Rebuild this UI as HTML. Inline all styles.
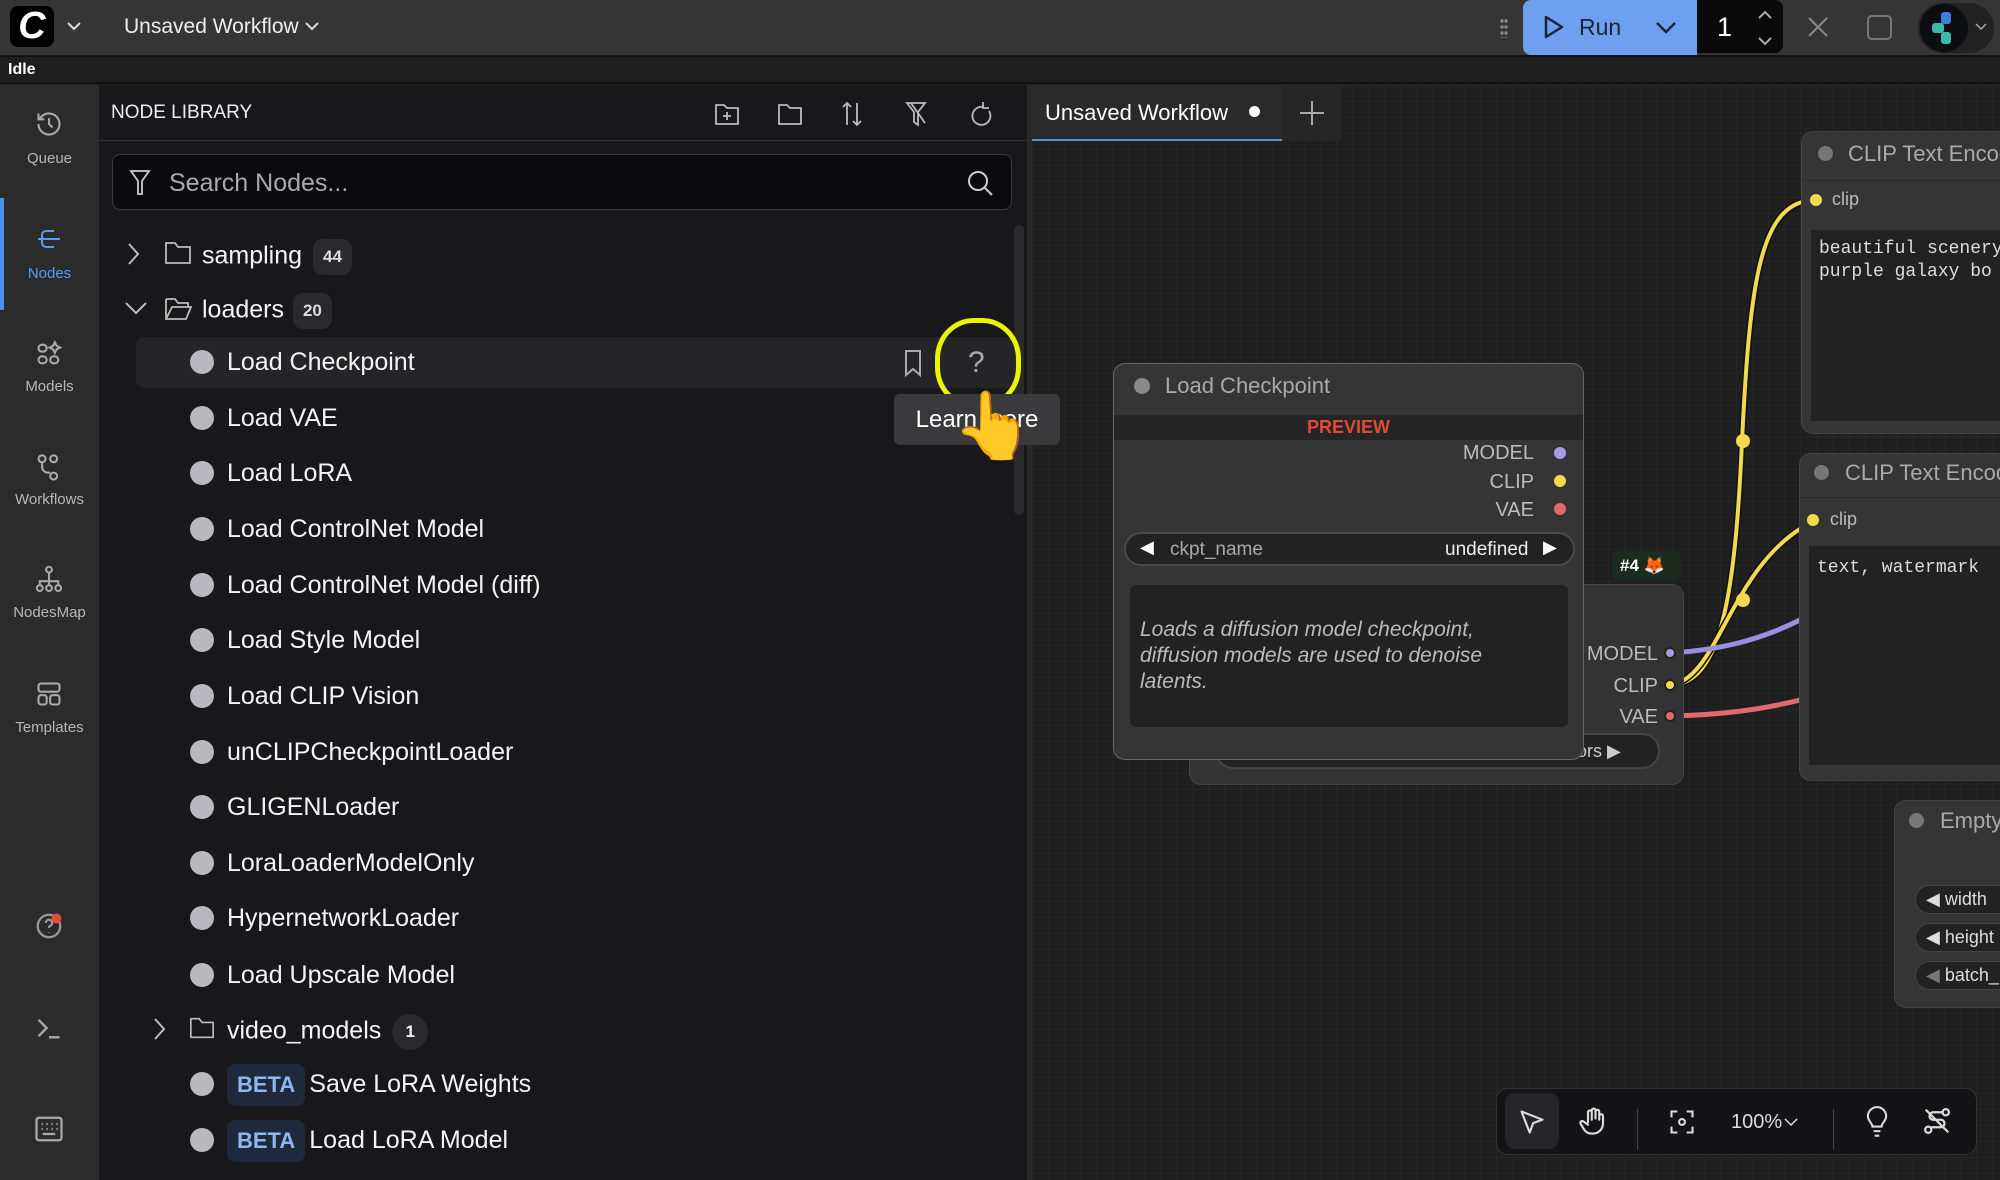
<!DOCTYPE html>
<html><head><meta charset="utf-8"><style>
*{box-sizing:border-box;margin:0;padding:0}
body{width:2000px;height:1180px;overflow:hidden;background:#202020;font-family:"Liberation Sans",sans-serif;color:#e0e0e0;position:relative}
.abs{position:absolute}
#top{left:0;top:0;width:2000px;height:57px;background:#353535;border-bottom:2px solid #111}
#idle{left:0;top:58px;width:2000px;height:26px;background:#1e1e1e;border-bottom:2px solid #111}
#side{left:0;top:85px;width:99px;height:1095px;background:#2b2b2b}
#panel{left:99px;top:85px;width:928px;height:1095px;background:#18181b}
#divider{left:1027px;top:85px;width:5px;height:1095px;background:#2a2a2a}
#canvas{left:1032px;top:85px;width:968px;height:1095px;background-color:#1f1f1f;
background-image:linear-gradient(#262626 1px,transparent 1px),linear-gradient(90deg,#262626 1px,transparent 1px);background-size:16px 16px}
.si{position:absolute;left:0;width:99px;text-align:center;font-size:15px;color:#b8b8b8}
.dot{position:absolute;left:190px;width:24px;height:24px;border-radius:50%;background:#b8b8be}
.lbl{position:absolute;left:227px;font-size:25px;color:#f4f4f4;white-space:nowrap}
.badge{display:inline-block;background:#2a2a2e;border-radius:10px;font-size:17px;font-weight:bold;padding:8px 10px;color:#ddd;vertical-align:middle}
.beta{display:inline-block;background:#1e2a3c;color:#8fb6f0;font-weight:bold;font-size:22px;padding:8px 10px;border-radius:8px;margin-right:4px}
.node{position:absolute;background:#353535;border-radius:12px;border:1px solid #444}
.sock{position:absolute;width:12px;height:12px;border-radius:50%}
.nt{position:absolute;font-size:20px;color:#bbb;text-align:right;width:120px}
</style></head><body>

<div id="top" class="abs">
  <div class="abs" style="left:10px;top:6px;width:44px;height:41px;background:#000;border-radius:8px;color:#fff;font-weight:bold;font-style:italic;font-size:38px;text-align:center;line-height:41px">C</div>
  <svg class="abs" style="left:66px;top:18px" width="16" height="16" viewBox="0 0 16 16"><path d="M2 5l6 6 6-6" stroke="#ddd" stroke-width="2" fill="none"/></svg>
  <div class="abs" style="left:124px;top:15px;font-size:21px;color:#eee">Unsaved Workflow</div>
  <svg class="abs" style="left:304px;top:18px" width="16" height="16" viewBox="0 0 16 16"><path d="M2 5l6 6 6-6" stroke="#ddd" stroke-width="2" fill="none"/></svg>
  <div class="abs" style="left:1500px;top:18px;width:8px;height:20px;background:radial-gradient(circle,#888 1.5px,transparent 2px) 0 0/4px 6px"></div>
  <div class="abs" style="left:1523px;top:0;width:174px;height:55px;background:#6fa0f0;border-radius:8px 0 0 8px"></div>
  <svg class="abs" style="left:1543px;top:14px" width="22" height="26" viewBox="0 0 22 26"><path d="M3 3l16 10-16 10z" stroke="#18243a" stroke-width="2.5" fill="none" stroke-linejoin="round"/></svg>
  <div class="abs" style="left:1579px;top:14px;font-size:23px;color:#18243a">Run</div>
  <svg class="abs" style="left:1654px;top:18px" width="24" height="20" viewBox="0 0 24 20"><path d="M3 5l9 9 9-9" stroke="#18243a" stroke-width="2.5" fill="none"/></svg>
  <div class="abs" style="left:1697px;top:0;width:86px;height:53px;background:#0a0a0a;border-radius:0 8px 8px 0"></div>
  <div class="abs" style="left:1717px;top:12px;font-size:27px;color:#fff">1</div>
  <svg class="abs" style="left:1756px;top:8px" width="18" height="40" viewBox="0 0 18 40"><path d="M3 10l6-6 6 6M3 30l6 6 6-6" stroke="#aaa" stroke-width="2" fill="none"/></svg>
  <svg class="abs" style="left:1806px;top:15px" width="24" height="24"><path d="M3 3l18 18M21 3L3 21" stroke="#888" stroke-width="2"/></svg>
  <div class="abs" style="left:1867px;top:15px;width:25px;height:25px;border:2.5px solid #777;border-radius:5px"></div>
  <div class="abs" style="left:1918px;top:3px;width:76px;height:50px;background:#222;border-radius:25px"></div>
  <div class="abs" style="left:1920px;top:4px;width:48px;height:48px;background:#0b0d10;border-radius:50%"></div>
  <svg class="abs" style="left:1928px;top:10px" width="32" height="36" viewBox="0 0 32 36"><rect x="13" y="2" width="10" height="12" rx="3" fill="#3d7fe0"/><rect x="4" y="13" width="12" height="10" rx="3" fill="#3ab8a8"/><rect x="13" y="22" width="10" height="12" rx="3" fill="#3ab8a8"/></svg>
  <svg class="abs" style="left:1975px;top:22px" width="12" height="10"><path d="M1 2l5 5 5-5" stroke="#aaa" stroke-width="1.5" fill="none"/></svg>
</div>
<div id="idle" class="abs"><div class="abs" style="left:8px;top:3px;font-size:16px;font-weight:bold;color:#fff">Idle</div></div>

<div id="side" class="abs">
  <div class="abs" style="left:0;top:113px;width:4px;height:112px;background:#4a8fe8"></div>
  <svg class="abs" style="left:35px;top:25px" width="28" height="28" viewBox="0 0 24 24" fill="none" stroke="#aaa" stroke-width="1.8"><path d="M3 12a9 9 0 1 0 3-6.7L3 8M3 3v5h5M12 7v5l3 3"/></svg>
  <div class="si" style="top:65px">Queue</div>
  <svg class="abs" style="left:36px;top:142px" width="28" height="24" viewBox="0 0 28 24" fill="none" stroke="#5a9af0" stroke-width="2"><path d="M18 4h-8a4 4 0 0 0-4 4v8a4 4 0 0 0 4 4h8M2 12h22"/></svg>
  <div class="si" style="top:180px;color:#5a9af0">Nodes</div>
  <svg class="abs" style="left:35px;top:255px" width="28" height="28" viewBox="0 0 24 24" fill="none" stroke="#aaa" stroke-width="1.8"><rect x="3" y="4" width="7" height="6" rx="3"/><rect x="3" y="14" width="7" height="6" rx="3"/><rect x="13" y="14" width="7" height="6" rx="3"/><path d="M17 2l1.5 3 3 1.5-3 1.5-1.5 3-1.5-3-3-1.5 3-1.5z"/></svg>
  <div class="si" style="top:293px">Models</div>
  <svg class="abs" style="left:35px;top:368px" width="28" height="30" viewBox="0 0 24 26" fill="none" stroke="#aaa" stroke-width="1.8"><circle cx="6" cy="5" r="3"/><circle cx="16" cy="5" r="3"/><circle cx="16" cy="20" r="3"/><path d="M6 8v4a5 5 0 0 0 5 5h2"/></svg>
  <div class="si" style="top:406px">Workflows</div>
  <svg class="abs" style="left:35px;top:480px" width="28" height="30" viewBox="0 0 24 26" fill="none" stroke="#aaa" stroke-width="1.8"><circle cx="12" cy="4" r="2.5"/><path d="M12 7v5M4 17v-3h16v3M12 12v5"/><circle cx="4" cy="20" r="2.5"/><circle cx="12" cy="20" r="2.5"/><circle cx="20" cy="20" r="2.5"/></svg>
  <div class="si" style="top:519px">NodesMap</div>
  <svg class="abs" style="left:35px;top:595px" width="28" height="28" viewBox="0 0 24 24" fill="none" stroke="#aaa" stroke-width="1.8"><rect x="3" y="3" width="18" height="7" rx="2"/><rect x="3" y="13" width="7" height="8" rx="2"/><rect x="13" y="13" width="8" height="8" rx="2"/></svg>
  <div class="si" style="top:634px">Templates</div>
  <svg class="abs" style="left:34px;top:826px" width="30" height="30" viewBox="0 0 24 24" fill="none" stroke="#999" stroke-width="1.8"><circle cx="12" cy="12" r="9"/><path d="M9.5 9.5a2.5 2.5 0 1 1 3.5 2.3c-.7.3-1 .9-1 1.7M12 17v.5"/><circle cx="18" cy="6" r="4" fill="#e84a3a" stroke="none"/></svg>
  <svg class="abs" style="left:35px;top:930px" width="28" height="26" viewBox="0 0 24 22" fill="none" stroke="#aaa" stroke-width="2"><path d="M3 4l7 7-7 7M12 19h9"/></svg>
  <svg class="abs" style="left:34px;top:1030px" width="30" height="28" viewBox="0 0 24 22" fill="none" stroke="#aaa" stroke-width="1.8"><rect x="2" y="2" width="20" height="18" rx="2"/><path d="M6 7h1M10 7h1M14 7h1M18 7h1M6 11h1M10 11h1M14 11h1M18 11h1M7 15h10"/></svg>
</div>

<div id="panel" class="abs">
  <div class="abs" style="left:12px;top:17px;font-size:19px;color:#eee">NODE LIBRARY</div>
  <svg class="abs" style="left:614px;top:14px;" width="300" height="30" viewBox="0 0 300 30" fill="none" stroke="#bbb" stroke-width="1.8">
    <path d="M3 6h8l3 3h11v16H3zM14 13v8M10 17h8"/>
    <path d="M66 6h8l3 3h11v16H66z"/>
    <path d="M134 4v22M130 8l4-4 4 4M144 26V4M140 22l4 4 4-4"/>
    <path d="M194 4h18l-7 9v13l-4-3V13zM198 4l14 20"/>
    <path d="M270 8a9 9 0 1 0 6 4M270 3v6h6"/>
  </svg>
  <div class="abs" style="left:0;top:55px;width:928px;height:1px;background:#333"></div>
  <div class="abs" style="left:13px;top:69px;width:900px;height:56px;background:#0b0b0d;border:1.5px solid #3a3a3c;border-radius:8px"></div>
  <svg class="abs" style="left:30px;top:84px" width="22" height="28" viewBox="0 0 22 28" fill="none" stroke="#ccc" stroke-width="1.8"><path d="M2 2h18l-7 10v13h-4V12z"/></svg>
  <div class="abs" style="left:70px;top:84px;font-size:25px;color:#aaa">Search Nodes...</div>
  <svg class="abs" style="left:867px;top:84px" width="28" height="28" viewBox="0 0 28 28" fill="none" stroke="#ccc" stroke-width="2"><circle cx="12" cy="12" r="9"/><path d="M19 19l7 7"/></svg>
  <div class="abs" style="left:915px;top:140px;width:10px;height:290px;background:#2a2a2c;border-radius:5px"></div>
</div>

<div id="divider" class="abs"></div>
<div id="canvas" class="abs"></div>

<!-- tree -->
<svg class="abs" style="left:126px;top:242px" width="16" height="24"><path d="M3 2l9 10-9 10" stroke="#bbb" stroke-width="2" fill="none"/></svg>
<svg class="abs" style="left:164px;top:240px" width="28" height="26" viewBox="0 0 28 26" fill="none" stroke="#bbb" stroke-width="1.8"><path d="M2 3h9l3 4h12v16H2z"/></svg>
<div class="lbl" style="left:202px;top:239px">sampling <span class="badge" style="margin-left:4px">44</span></div>
<svg class="abs" style="left:124px;top:300px" width="24" height="16"><path d="M2 3l10 10 10-10" stroke="#bbb" stroke-width="2" fill="none"/></svg>
<svg class="abs" style="left:164px;top:296px" width="28" height="26" viewBox="0 0 28 26" fill="none" stroke="#bbb" stroke-width="1.8"><path d="M2 3h9l3 4h10v4M2 3v20h20l5-12H8L2 23"/></svg>
<div class="lbl" style="left:202px;top:293px">loaders <span class="badge" style="margin-left:2px">20</span></div>

<div class="abs" style="left:136px;top:337px;width:878px;height:51px;background:#252528;border-radius:8px"></div>
<svg class="abs" style="left:903px;top:349px" width="20" height="28" viewBox="0 0 20 28" fill="none" stroke="#aaa" stroke-width="2"><path d="M3 2h14v24l-7-6-7 6z"/></svg>
<div class="abs" style="left:968px;top:346px;font-size:30px;color:#aaa">?</div>
<div class="abs" style="left:935px;top:318px;width:86px;height:90px;border:5px solid #e8f500;border-radius:45%"></div>

<div class="dot" style="top:350px"></div><div class="lbl" style="top:348px">Load Checkpoint</div>
<div class="dot" style="top:406px"></div><div class="lbl" style="top:404px">Load VAE</div>
<div class="dot" style="top:461px"></div><div class="lbl" style="top:459px">Load LoRA</div>
<div class="dot" style="top:517px"></div><div class="lbl" style="top:515px">Load ControlNet Model</div>
<div class="dot" style="top:573px"></div><div class="lbl" style="top:571px">Load ControlNet Model (diff)</div>
<div class="dot" style="top:628px"></div><div class="lbl" style="top:626px">Load Style Model</div>
<div class="dot" style="top:684px"></div><div class="lbl" style="top:682px">Load CLIP Vision</div>
<div class="dot" style="top:740px"></div><div class="lbl" style="top:738px">unCLIPCheckpointLoader</div>
<div class="dot" style="top:795px"></div><div class="lbl" style="top:793px">GLIGENLoader</div>
<div class="dot" style="top:851px"></div><div class="lbl" style="top:849px">LoraLoaderModelOnly</div>
<div class="dot" style="top:906px"></div><div class="lbl" style="top:904px">HypernetworkLoader</div>
<div class="dot" style="top:963px"></div><div class="lbl" style="top:961px">Load Upscale Model</div>
<svg class="abs" style="left:152px;top:1017px" width="16" height="24"><path d="M3 2l9 10-9 10" stroke="#bbb" stroke-width="2" fill="none"/></svg>
<svg class="abs" style="left:189px;top:1015px" width="26" height="26" viewBox="0 0 28 26" fill="none" stroke="#bbb" stroke-width="1.8"><path d="M2 3h9l3 4h12v16H2z"/></svg>
<div class="lbl" style="top:1014px">video_models <span style="display:inline-block;width:36px;height:36px;border-radius:50%;background:#2a2a2e;font-size:17px;font-weight:bold;text-align:center;line-height:36px;vertical-align:middle;margin-left:4px">1</span></div>
<div class="dot" style="top:1072px"></div><div class="lbl" style="top:1064px"><span class="beta">BETA</span>Save LoRA Weights</div>
<div class="dot" style="top:1128px"></div><div class="lbl" style="top:1120px"><span class="beta">BETA</span>Load LoRA Model</div>

<!-- tooltip -->
<div class="abs" style="left:894px;top:394px;width:166px;height:51px;background:#3a3a3c;border-radius:6px;font-size:24px;color:#fff;text-align:center;line-height:51px">Learn more</div>
<div class="abs" style="left:952px;top:392px;font-size:66px;line-height:1;color:#f5c13a">👆</div>

<!-- tabs -->
<div class="abs" style="left:1032px;top:85px;width:250px;height:56px;background:#2a2a2a;border-bottom:2px solid #5a8fd0"></div>
<div class="abs" style="left:1045px;top:100px;font-size:22px;color:#fff">Unsaved Workflow</div>
<div class="abs" style="left:1249px;top:106px;width:11px;height:11px;border-radius:50%;background:#fff"></div>
<div class="abs" style="left:1282px;top:85px;width:60px;height:56px;background:#262626"></div>
<svg class="abs" style="left:1299px;top:100px" width="26" height="26"><path d="M13 1v24M1 13h24" stroke="#aaa" stroke-width="2"/></svg>

<!-- wires -->
<svg class="abs" style="left:0;top:0" width="2000" height="1180">
  <path d="M1670 685 C1720 685,1735 600,1742 441 C1750 280,1760 200,1816 200" stroke="#111" stroke-width="7" fill="none"/>
  <path d="M1670 685 C1720 685,1735 600,1742 441 C1750 280,1760 200,1816 200" stroke="#f2d94e" stroke-width="4" fill="none"/>
  <path d="M1670 685 C1720 680,1730 560,1816 520" stroke="#111" stroke-width="7" fill="none"/>
  <path d="M1670 685 C1720 680,1730 560,1816 520" stroke="#f2d94e" stroke-width="4" fill="none"/>
  <path d="M1670 653 C1720 650,1760 640,1800 620" stroke="#9a8ee0" stroke-width="5" fill="none"/>
  <path d="M1670 716 C1720 715,1760 710,1800 700" stroke="#e06a6a" stroke-width="5" fill="none"/>
  <circle cx="1743" cy="441" r="7" fill="#f2d94e"/><circle cx="1743" cy="600" r="7" fill="#f2d94e"/>
</svg>

<!-- real Load Checkpoint node behind -->
<div class="node" style="left:1189px;top:584px;width:495px;height:201px;background:#333"></div>
<div class="abs" style="left:1612px;top:551px;width:69px;height:29px;background:#1d2a20;border-radius:6px;font-size:17px;font-weight:bold;color:#fff;padding:5px 8px">#4 🦊</div>
<div class="nt" style="left:1538px;top:643px">MODEL</div><div class="sock" style="left:1664px;top:647px;background:#a79ae6;border:2px solid #222"></div>
<div class="nt" style="left:1538px;top:675px">CLIP</div><div class="sock" style="left:1664px;top:679px;background:#f2d94e;border:2px solid #222"></div>
<div class="nt" style="left:1538px;top:706px">VAE</div><div class="sock" style="left:1664px;top:710px;background:#e06a6a;border:2px solid #222"></div>
<div class="abs" style="left:1215px;top:733px;width:445px;height:36px;background:#222;border:2px solid #444;border-radius:18px;font-size:18px;color:#ccc;padding:6px 0 0 360px">ors ▶</div>

<!-- preview node -->
<div class="node" style="left:1113px;top:363px;width:471px;height:397px;background:#353535;border:1.5px solid #666"></div>
<div class="abs" style="left:1134px;top:378px;width:16px;height:16px;border-radius:50%;background:#888"></div>
<div class="abs" style="left:1165px;top:373px;font-size:22px;color:#aaa">Load Checkpoint</div>
<div class="abs" style="left:1114px;top:415px;width:469px;height:25px;background:#252525;text-align:center;font-size:18px;font-weight:bold;color:#e04a3a;line-height:25px">PREVIEW</div>
<div class="nt" style="left:1414px;top:442px">MODEL</div><div class="sock" style="left:1554px;top:447px;background:#a79ae6"></div>
<div class="nt" style="left:1414px;top:471px">CLIP</div><div class="sock" style="left:1554px;top:475px;background:#f2d94e"></div>
<div class="nt" style="left:1414px;top:499px">VAE</div><div class="sock" style="left:1554px;top:503px;background:#e06a6a"></div>
<div class="abs" style="left:1124px;top:532px;width:451px;height:34px;background:#222;border:2px solid #4a4a4a;border-radius:17px"></div>
<div class="abs" style="left:1140px;top:537px;font-size:18px;color:#fff">◀</div>
<div class="abs" style="left:1170px;top:539px;font-size:19px;color:#aaa">ckpt_name</div>
<div class="abs" style="left:1445px;top:539px;font-size:19px;color:#eee">undefined</div>
<div class="abs" style="left:1543px;top:537px;font-size:18px;color:#fff">▶</div>
<div class="abs" style="left:1130px;top:585px;width:438px;height:142px;background:#222;border-radius:6px;padding:32px 60px 0 10px;font-size:21px;font-style:italic;color:#bbb;line-height:26px">Loads a diffusion model checkpoint, diffusion models are used to denoise latents.</div>

<!-- CLIP nodes -->
<div class="node" style="left:1801px;top:131px;width:220px;height:303px"></div>
<div class="abs" style="left:1818px;top:146px;width:15px;height:15px;border-radius:50%;background:#777"></div>
<div class="abs" style="left:1848px;top:141px;font-size:22px;color:#aaa;white-space:nowrap">CLIP Text Encode</div>
<div class="abs" style="left:1802px;top:180px;width:200px;height:1px;background:#2a2a2a"></div>
<div class="sock" style="left:1810px;top:194px;background:#f2d94e"></div>
<div class="abs" style="left:1832px;top:189px;font-size:18px;color:#bbb">clip</div>
<div class="abs" style="left:1811px;top:230px;width:200px;height:191px;background:#222;font-family:'Liberation Mono',monospace;font-size:18px;color:#ddd;padding:8px 8px;line-height:23px;white-space:pre">beautiful scenery
purple galaxy bo</div>

<div class="node" style="left:1799px;top:453px;width:220px;height:328px"></div>
<div class="abs" style="left:1814px;top:465px;width:15px;height:15px;border-radius:50%;background:#777"></div>
<div class="abs" style="left:1845px;top:460px;font-size:22px;color:#aaa;white-space:nowrap">CLIP Text Encode</div>
<div class="abs" style="left:1800px;top:497px;width:200px;height:1px;background:#2a2a2a"></div>
<div class="sock" style="left:1807px;top:514px;background:#f2d94e"></div>
<div class="abs" style="left:1830px;top:509px;font-size:18px;color:#bbb">clip</div>
<div class="abs" style="left:1809px;top:546px;width:200px;height:219px;background:#222;font-family:'Liberation Mono',monospace;font-size:18px;color:#ddd;padding:12px 8px">text, watermark</div>

<div class="node" style="left:1894px;top:800px;width:130px;height:208px"></div>
<div class="abs" style="left:1909px;top:813px;width:15px;height:15px;border-radius:50%;background:#777"></div>
<div class="abs" style="left:1940px;top:808px;font-size:22px;color:#aaa">Empty</div>
<div class="abs" style="left:1915px;top:885px;width:100px;height:29px;background:#222;border:1.5px solid #444;border-radius:15px;font-size:18px;color:#ddd;padding:3px 10px">◀ width</div>
<div class="abs" style="left:1915px;top:923px;width:100px;height:29px;background:#222;border:1.5px solid #444;border-radius:15px;font-size:18px;color:#ddd;padding:3px 10px">◀ height</div>
<div class="abs" style="left:1915px;top:961px;width:100px;height:29px;background:#222;border:1.5px solid #444;border-radius:15px;font-size:18px;color:#ddd;padding:3px 10px"><span style="color:#777">◀</span> batch_</div>

<!-- bottom toolbar -->
<div class="abs" style="left:1496px;top:1088px;width:481px;height:67px;background:#141416;border:1.5px solid #333;border-radius:12px"></div>
<div class="abs" style="left:1505px;top:1093px;width:54px;height:56px;background:#26262a;border-radius:10px"></div>
<svg class="abs" style="left:1518px;top:1108px" width="28" height="28" viewBox="0 0 24 24" fill="none" stroke="#ddd" stroke-width="1.8" stroke-linejoin="round"><path d="M3 3l18 7-8 3-3 8z"/></svg>
<svg class="abs" style="left:1578px;top:1106px" width="30" height="30" viewBox="0 0 24 24" fill="none" stroke="#ddd" stroke-width="1.7" stroke-linecap="round"><path d="M8 13V5a1.5 1.5 0 0 1 3 0v6M11 10V3.5a1.5 1.5 0 0 1 3 0V10M14 10V4.5a1.5 1.5 0 0 1 3 0V11M17 8a1.5 1.5 0 0 1 3 0v6a8 8 0 0 1-8 8h-1a7 7 0 0 1-6-3l-3-5a1.5 1.5 0 0 1 2.5-1.5L8 15"/></svg>
<div class="abs" style="left:1637px;top:1109px;width:1px;height:41px;background:#444"></div>
<svg class="abs" style="left:1668px;top:1108px" width="28" height="28" viewBox="0 0 24 24" fill="none" stroke="#ddd" stroke-width="1.8"><path d="M3 8V3h5M16 3h5v5M21 16v5h-5M8 21H3v-5"/><circle cx="12" cy="12" r="2.5"/></svg>
<div class="abs" style="left:1731px;top:1111px;font-size:20px;color:#ddd">100%</div>
<svg class="abs" style="left:1784px;top:1117px" width="14" height="10"><path d="M1 2l6 6 6-6" stroke="#ddd" stroke-width="1.5" fill="none"/></svg>
<div class="abs" style="left:1833px;top:1109px;width:1px;height:41px;background:#444"></div>
<svg class="abs" style="left:1863px;top:1106px" width="28" height="32" viewBox="0 0 24 28" fill="none" stroke="#ddd" stroke-width="1.8"><path d="M8 18c0-3-4-5-4-9a8 8 0 0 1 16 0c0 4-4 6-4 9zM9 22h6M10 26h4"/></svg>
<svg class="abs" style="left:1922px;top:1106px" width="30" height="30" viewBox="0 0 24 24" fill="none" stroke="#ddd" stroke-width="1.8"><circle cx="19" cy="5" r="2.5"/><circle cx="5" cy="19" r="2.5"/><path d="M16.5 5H9a3 3 0 0 0 0 6h6a3 3 0 0 1 0 6H7.5M3 3l18 18"/></svg>
</body></html>
